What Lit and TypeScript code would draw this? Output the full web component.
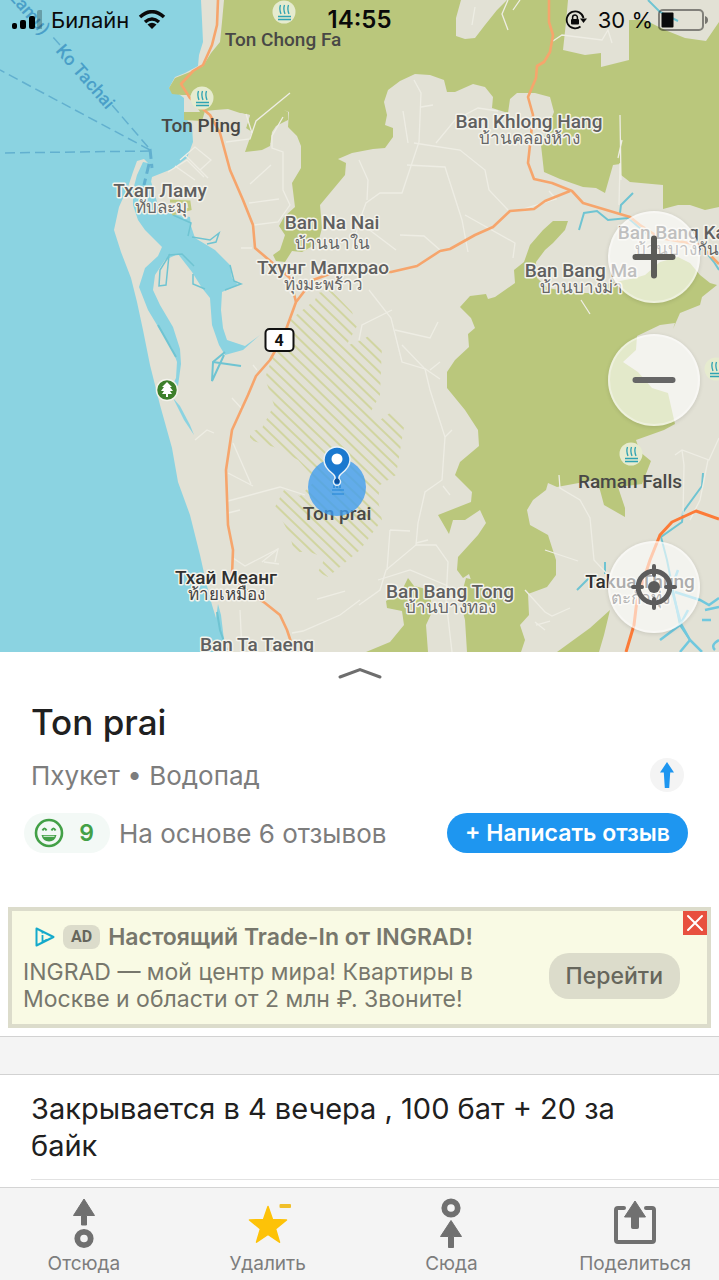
import { LitElement, html, svg, css } from "lit";
import { customElement } from "lit/decorators.js";

interface Label {
  x: number;
  y: number;
  text: string;
  kind: string;
}

const LABELS: Label[] = [
  { x: 283, y: 46, text: "Ton Chong Fa", kind: "poi" },
  { x: 201, y: 132, text: "Ton Pling", kind: "poi" },
  { x: 337, y: 520, text: "Ton prai", kind: "poi" },
  { x: 630, y: 488, text: "Raman Falls", kind: "poi" },
  { x: 160, y: 197, text: "Тхап Ламу", kind: "place" },
  { x: 161, y: 213, text: "ทับละมุ", kind: "thai" },
  { x: 529, y: 128, text: "Ban Khlong Hang", kind: "place" },
  { x: 529, y: 144, text: "บ้านคลองห้าง", kind: "thai" },
  { x: 332, y: 229, text: "Ban Na Nai", kind: "place" },
  { x: 332, y: 249, text: "บ้านนาใน", kind: "thai" },
  { x: 323, y: 274, text: "Тхунг Мапхрао", kind: "place" },
  { x: 323, y: 290, text: "ทุ่งมะพร้าว", kind: "thai" },
  { x: 581, y: 277, text: "Ban Bang Ma", kind: "place" },
  { x: 581, y: 293, text: "บ้านบางม่า", kind: "thai" },
  { x: 677, y: 239, text: "Ban Bang Kan", kind: "place" },
  { x: 677, y: 255, text: "บ้านบางกัน", kind: "thai" },
  { x: 226, y: 584, text: "Тхай Меанг", kind: "town" },
  { x: 226, y: 600, text: "ท้ายเหมือง", kind: "thai dark" },
  { x: 450, y: 598, text: "Ban Bang Tong", kind: "place" },
  { x: 450, y: 613, text: "บ้านบางทอง", kind: "thai" },
  { x: 640, y: 588, text: "Takua Thung", kind: "town" },
  { x: 640, y: 604, text: "ตะกั่วทุ่ง", kind: "thai dark" },
  { x: 257, y: 651, text: "Ban Ta Taeng", kind: "place" },
];

const FALLS = [
  [284, 12],
  [202, 98],
  [631, 454],
  [716, 369],
];

const ROADS = [
  "M226 142L250 139L256 121L290 93",
  "M252 133L246 114M283 117L272 136L272 148L283 152L283 190L290 205L278 222L254 225",
  "M250 184L271 165M249 203L279 199M241 248L252 248",
  "M180 160L195 147L211 160L200 170M185 155L208 178M175 166L195 180M168 172L187 160L204 177",
  "M414 80L421 93L419 142L402 193L380 193L366 203L359 222L352 250",
  "M414 143L460 150L485 170L489 190L508 210M407 165L445 167L462 220L468 252",
  "M403 111L408 143M421 107L433 105M436 143L455 120L478 108L498 111",
  "M359 160L368 180L367 200M359 222L396 250M400 235L424 236L440 250M465 215L515 243L513 258",
  "M369 290L391 318L394 330L402 362L425 369L430 390L445 437L442 480L425 492L418 523L416 545L386 570L380 590L359 605",
  "M402 345L424 368L440 379M430 370L440 362M445 437L452 430M443 486L450 495M416 545L436 545L448 562L446 600L452 652",
  "M416 543L428 540M390 530L387 570M390 530L410 531M378 580L410 570L448 586",
  "M559 475L560 488L580 500L590 518L594 560L620 588",
  "M545 550L578 561M525 590L545 612L552 616L570 608M535 622L545 630M536 625L550 621",
  "M475 7L472 25M508 0L502 14L508 30M520 0L513 10",
  "M553 41L562 35L602 40L608 30L612 43M620 115L621 180M618 158L622 140M620 163L619 205M549 191L556 199L520 210",
  "M228 473L253 486M228 501L280 487L305 495M228 513L240 510M233 443L251 484",
  "M233 558L245 566L278 549L275 562M264 562L279 564M240 610L242 652",
  "M292 633L303 631L340 615L360 600M317 599L345 591M278 549L262 562",
  "M359 340L362 325L392 310M395 330L430 338L438 322",
  "M675 455L682 450L709 460L719 438M682 450L684 465L683 515M708 460L700 500L690 520",
  "M581 300L590 314M232 398L243 410M195 440L207 430L214 433M253 365L257 370",
];

function icon(name: string) {
  switch (name) {
    case "from":
      return svg`<path d="M22 0L32.500 16.500H24.500V26H19.500V16.500H11.500Z" stroke="#707070" stroke-width="1" stroke-linejoin="round"/><circle cx="22" cy="39.500" r="6.700" fill="none" stroke="#707070" stroke-width="5.800"/>`;
    case "to":
      return svg`<circle cx="22" cy="9" r="6.700" fill="none" stroke="#707070" stroke-width="5.800"/><path d="M22 21.500L32.500 37.500H24.500V48.500H19.500V37.500H11.500Z" stroke="#707070" stroke-width="1" stroke-linejoin="round"/>`;
    case "remove":
      return svg`<path d="M22 7.500L26.500 20.500L40.500 21L29.500 29.800L33.500 43.200L22 35.500L10.500 43.200L14.500 29.800L3.500 21L17.500 20.500Z" fill="#fdc208" stroke="#fdc208" stroke-width="1.500" stroke-linejoin="round"/><rect x="33.500" y="5" width="11.500" height="4" rx="1" fill="#f0bf2a"/>`;
    default:
      return svg`<path d="M11 9H5Q3 9 3 11V41Q3 43 5 43H39Q41 43 41 41V11Q41 9 39 9H33" fill="none" stroke="#707070" stroke-width="4" stroke-linecap="round"/><path d="M22 2L32.500 18H25.500V28.500Q25.500 29.500 24.500 29.500H19.500Q18.500 29.500 18.500 28.500V18H11.500Z" stroke="#707070" stroke-width="1" stroke-linejoin="round"/>`;
  }
}

@customElement("place-map")
class PlaceMap extends LitElement {
  static styles = css`
    :host {
      display: block;
      position: relative;
      overflow: hidden;
      background: #8bd3e1;
      font-family: Roboto, "Noto Sans", sans-serif;
    }
    .canvas {
      position: absolute;
      inset: 0;
      width: 100%;
      height: 100%;
    }
    text {
      text-anchor: middle;
      font-weight: 500;
      font-size: 19px;
      stroke: #f4f3ec;
      stroke-width: 3px;
      stroke-linejoin: round;
      paint-order: stroke;
      fill: #606060;
    }
    text.poi {
      fill: #484846;
      stroke: none;
    }
    text.town {
      fill: #303030;
    }
    text.thai {
      font-size: 17px;
      font-weight: 400;
      fill: #666;
    }
    text.dark {
      fill: #444;
    }
    text.ferry {
      fill: #4a9fc8;
      stroke: none;
      font-size: 18px;
    }
    text.start {
      text-anchor: start;
    }
    text.end {
      text-anchor: end;
    }
    text.shield {
      fill: #111;
      stroke: none;
      font-size: 16px;
      font-weight: 700;
    }
    .controls {
      position: absolute;
      right: 19px;
      bottom: 19px;
      display: flex;
      flex-direction: column;
    }
    .control {
      width: 92px;
      height: 92px;
      margin: 0 0 31px;
      padding: 0;
      border: 2px solid rgba(255, 255, 255, 0.35);
      border-radius: 50%;
      background: rgba(255, 255, 255, 0.6);
      box-shadow: 0 1px 4px rgba(0, 0, 0, 0.12);
      display: grid;
      place-items: center;
    }
    .control.locate {
      margin: 84px 0 0;
    }
  `;

  render() {
    return html`
      <svg class="canvas" viewBox="0 0 719 652" preserveAspectRatio="xMidYMid slice" role="img" aria-label="Карта">
        <defs>
          <pattern id="hatch" width="8" height="8" patternUnits="userSpaceOnUse" patternTransform="rotate(44)">
            <path d="M0 4H8" stroke="#cdd294" stroke-width="1.600" />
          </pattern>
        </defs>
        <path
          fill="#e2e1d5"
          d="M201 0L202 20L203 42L199 55L198 66L185 73L175 77L169 88L180 95L184 98L184 116L192 126L193 142L187 158L172 169L152 177L150 187L146 180L148 163L144 159L137 161L133 172L128 187L119 207L114 230L121 252L131 278L137 302L143 330L150 365L160 405L172 448L178 482L190 515L200 555L206 582L212 605L216 618L218 604L221 615L224 640L227 652H719V0Z"
        />
        <g fill="#bac77c">
          <path
            d="M224 0L222 22L220 42L211 53L203 66L190 72L175 78L169 88L172 94L182 95L190 95L200 112L184 112L184 120L202 121L205 111L215 110L228 109L240 113L250 115L246 128L252 132L245 152L262 150L270 146L272 132L276 126L288 120L288 112L284 110L289 112L288 127L297 136L301 146L301 168L292 183L295 207L284 217L279 226L285 235L280 250L273 255L276 261L285 262L292 251L302 252L318 243L322 228L320 205L345 175L346 163L338 159L352 153L373 149L385 148L393 137L393 128L385 125L387 115L384 102L388 90L400 81L415 74L430 75L444 80L447 92L455 92L473 84L485 87L493 97L492 108L508 113L510 99L517 93L535 93L550 97L554 112L541 145L544 172L560 179L583 187L596 188L605 193L613 165L620 164L621 175L630 182L663 185L663 209L678 205L690 205L705 210L719 207V0Z"
          />
          <path
            d="M568 221L553 221L543 230L530 245L524 262L514 270L515 283L505 290L495 297L488 299L486 294L470 296L460 307L471 318L475 328L468 334L469 347L455 360L447 372L447 388L465 410L478 430L479 446L460 462L455 475L472 492L471 502L438 515L449 534L453 520L465 520L480 510L486 523L478 535L458 557L457 570L463 578L469 574L472 583L528 594L547 587L556 575L556 560L548 535L530 525L527 510L533 500L546 490L548 483L557 487L595 480L600 490L604 505L625 517L625 508L618 487L642 484L651 461L640 452L636 440L664 430L675 424L668 393L652 388L638 372L623 362L636 350L637 336L660 325L675 323L673 329L680 313L700 305L702 297L717 285L710 283L700 275L690 263L678 257L660 262L645 275L635 278L610 283L590 293L575 293L548 288L537 278L536 262L545 250L553 243L565 230Z"
          />
          <path d="M386 601L401 592L408 578L414 586L430 590L432 612L426 625L428 652H366L390 642L404 625L402 611L387 608Z" />
          <path d="M466 578L528 593L529 615L520 625L525 640L521 652H467L465 620L460 600Z" />
          <path d="M557 652L590 628L610 610L604 635L599 652Z" />
        </g>
        <g fill="#e2e1d5">
          <path d="M461 0L456 18L456 36L465 39L475 38L485 25L497 10L507 0Z" />
          <path d="M568 0L566 22L563 50L585 55L601 53L601 67L629 60L629 20L645 20L665 30L685 38L706 41L719 22V0Z" />
          <path d="M250 115L240 113L246 128ZM283 112L288 128L276 138L270 144L283 148L292 140Z" />
        </g>
        <path
          d="M315 300L318 293L331 290L352 312L357 326L346 346L362 340L370 335L382 345L380 395L370 413L380 420L394 410L404 427L396 475L380 485L378 500L382 520L360 550L328 577L318 572L325 558L310 552L294 552L290 535L275 507L284 490L300 496L316 480L298 460L274 447L250 440L250 432L262 428L274 405L265 378L275 350L290 320Z"
          fill="url(#hatch)"
        />
        <path
          fill="#8bd3e1"
          d="M150 178L148 163L143 162L137 175L133 190L133 205L138 220L145 230L162 247L158 256L145 268L139 287L148 310L160 330L172 348L177 362L176 378L173 384L178 386L181 364L180 349L173 327L160 305L153 290L155 275L165 260L178 254L192 272L202 288L210 298L212 325L219 345L225 355L243 350L260 335L245 346L227 340L223 328L221 310L222 292L238 285L232 278L230 265L215 250L195 238L191 226L190 217L172 214L158 205Z"
        />
        <g fill="none" stroke="#6fc4d2" stroke-width="1.500">
          <path d="M192 237L210 240L219 233L216 242L207 244M188 236L191 223L173 215M170 254L160 270L159 286L166 285L169 255L182 254L194 266M193 274L193 284L205 289M230 265L234 281L241 284L225 290" />
          <path d="M225 352L213 362L212 381L224 355M213 362L241 366M158 325L176 357M217 612L220 630L227 650" stroke-width="2" />
          <path d="M703 473L702 486L683 512L682 522L661 537L667 560L675 600L680 625L690 640M579 230L584 213L597 211L608 220L628 218L648 235M620 213L621 205L633 193M648 0L660 12L678 21M605 562V574M577 590L590 577M700 245L714 262L719 270" stroke-width="2" />
          <path d="M672 590L681 624L690 640L702 652M680 625L660 640M680 625L688 610M690 640L680 652M675 592L700 600L709 605L719 598M705 610L719 607M702 620H711M715 650Q710 645 719 640M667 600L678 570" stroke="#70c8de" stroke-width="2.500" />
        </g>
        <path d="M173 398L180 406L190 425L194 435L184 420Z" fill="#8bd3e1" />
        <path d="M170 201L189 202L190 209L172 214" fill="none" stroke="#c0ca80" stroke-width="3" />
        <g fill="none" stroke="#eeede4" stroke-width="1.300">
          ${ROADS.map((d) => svg`<path d=${d} />`)}
        </g>
        <g fill="none" stroke="#f6a56c" stroke-width="2.600" stroke-linejoin="round">
          <path d="M218 0L217 25L212 45L203 65L193 71L181 84L190 98L210 115L220 133L230 170L243 200L253 225L255 248L275 265L290 278L296 302" />
          <path d="M549 0L549 22L553 35L550 52L544 62L537 66L536 78L528 97L533 115L530 145L528 163L534 179L552 183L572 191L583 203L630 217L640 225L660 238L700 245L719 264" />
          <path d="M570 191L545 201L534 209L510 211L493 227L475 235L450 249L440 251L417 266L391 272L335 272L313 280L296 302L284 335L270 360L256 376L248 395L232 430L226 470L228 525L233 550L232 575L248 592L265 603L280 615L287 630L292 645" />
          <path d="M719 519L696 511L672 522L660 535L650 560L637 600L634 625L626 652" stroke="#fc7b38" stroke-width="3" />
        </g>
        <g fill="none" stroke="#62b0cf" stroke-width="1.500" stroke-dasharray="10 5">
          <path d="M150 151L0 153M150 150L0 70M148 147L112 105M60 45L52 36" />
          <path d="M150 149L152 168M149 164L144 185" stroke-width="3" />
        </g>
        <text class="ferry start" transform="translate(55 51) rotate(49)">Ko Tachai</text>
        <text class="ferry end" transform="translate(42 36) rotate(49)">(Тхап Lamu)</text>
        ${LABELS.map((l) => svg`<text class=${l.kind} x=${l.x} y=${l.y}>${l.text}</text>`)}
        ${FALLS.map(
          ([x, y]) => svg`<g transform=${`translate(${x} ${y})`}>
            <circle r="11.500" fill="#e6ebcf" />
            <path d="M-3.500 -7Q-5 -3 -3 2M0.500 -7Q-1 -3 1 2M4.500 -7Q3 -3 5 2M-6 4.500H7M-6 7.500H7" fill="none" stroke="#2fa3b3" stroke-width="1.300" />
          </g>`
        )}
        <rect x="265.500" y="329" width="28" height="22" rx="4" fill="#fff" stroke="#111" stroke-width="2" />
        <text class="shield" x="279" y="346">4</text>
        <circle cx="167" cy="390" r="10.500" fill="#3d7f2b" stroke="#f4f3ec" stroke-width="1.500" />
        <path d="M167 382L172 387H170L173 391H170L172 394H168V397H166V394H162L164 391H161L164 387H162Z" fill="#fff" />
        <circle cx="337" cy="487" r="29" fill="#3d9cf0" fill-opacity=".78" />
        <path d="M332 490H344M332 494H344M334 484V488M337 484V488M340 482V488" stroke="#1f83d6" stroke-width="1.200" />
        <path
          d="M337 447A12.800 12.800 0 0 0 324 460C324 467 329 471 333 474Q335.500 476 335 479A3.500 3.500 0 1 0 339 479Q338.500 476 341 474C345 471 350 467 350 460A12.800 12.800 0 0 0 337 447Z"
          fill="#1b79cf"
          stroke="#e8f1f7"
          stroke-width="1.500"
        />
        <circle cx="337" cy="459" r="5.500" fill="#fff" />
        <circle cx="337" cy="481" r="2.500" fill="#0d4f99" />
      </svg>
      <div class="controls">
        <button class="control" aria-label="Приблизить">
          <svg width="44" height="44" viewBox="0 0 44 44"><path d="M22 3.500V40.500M3.500 22H40.500" stroke="#5c5c58" stroke-width="6" stroke-linecap="round" /></svg>
        </button>
        <button class="control" aria-label="Отдалить">
          <svg width="44" height="44" viewBox="0 0 44 44"><path d="M3.500 22H40.500" stroke="#666" stroke-width="6" stroke-linecap="round" /></svg>
        </button>
        <button class="control locate" aria-label="Моё местоположение">
          <svg width="48" height="48" viewBox="0 0 48 48" fill="none" stroke="#5c5c5c">
            <circle cx="24" cy="24" r="15.800" stroke-width="5" />
            <circle cx="24" cy="24" r="6" fill="#5c5c5c" stroke="none" />
            <path d="M24 3V12M24 36V45M3 24H12M36 24H45" stroke-width="4" stroke-linecap="round" />
          </svg>
        </button>
      </div>
    `;
  }
}

@customElement("status-bar")
class StatusBar extends LitElement {
  static styles = css`
    :host {
      display: grid;
      grid-template-columns: 1fr auto 1fr;
      align-items: center;
      height: 40px;
      padding: 0 11px;
      color: #0a0a0a;
      font: 400 22px/26px Inter, sans-serif;
    }
    .side {
      display: flex;
      align-items: center;
      gap: 10px;
    }
    .start {
      gap: 9px;
    }
    .end {
      justify-content: flex-end;
      gap: 5px;
    }
    .time {
      font-weight: 600;
      font-size: 24px;
    }
    .lock {
      margin-right: 6px;
    }
  `;

  render() {
    return html`
      <div class="side start">
        <svg width="31" height="20" viewBox="0 0 31 20">
          <rect x="1" y="13" width="5" height="6" rx="2" />
          <rect x="9" y="10" width="6" height="9" rx="2" />
          <rect x="18" y="6" width="6" height="13" rx="2" />
          <rect x="26" y="0" width="6" height="19" rx="2" fill-opacity=".25" />
        </svg>
        <span>Билайн</span>
        <svg width="28" height="20" viewBox="0 0 28 20" fill="none" stroke="#0a0a0a" stroke-width="3.600">
          <path d="M2 7Q14 -3.500 26 7" />
          <path d="M7 12Q14 6 21 12" />
          <path d="M14 19L9.500 14.500Q14 11 18.500 14.500Z" fill="#0a0a0a" stroke="none" />
        </svg>
      </div>
      <span class="time">14:55</span>
      <div class="side end">
        <svg class="lock" width="22" height="20" viewBox="0 0 22 20" fill="none" stroke="#0a0a0a" stroke-width="1.800">
          <path d="M15.500 16.500A8.500 8.500 0 1 1 18.500 8" />
          <path d="M15 8.500H22L18.500 13Z" fill="#0a0a0a" stroke="none" />
          <rect x="6" y="9" width="8" height="5.500" rx="1" fill="#0a0a0a" stroke="none" />
          <path d="M7.600 9V7.500A2.400 2.400 0 0 1 12.400 7.500V9" stroke-width="1.500" />
        </svg>
        <span>30 %</span>
        <svg width="50" height="22" viewBox="0 0 50 22">
          <rect x="1" y="1" width="44" height="20" rx="4" fill="none" stroke="#0a0a0a" stroke-opacity=".45" stroke-width="2" />
          <rect x="3.500" y="3.500" width="12" height="15" rx="1" fill="#0a0a0a" />
          <path d="M47 7Q50 8 50 11T47 15Z" fill="#0a0a0a" fill-opacity=".5" />
        </svg>
      </div>
    `;
  }
}

@customElement("app-root")
class AppRoot extends LitElement {
  static styles = css`
    :host {
      display: flex;
      flex-direction: column;
      min-height: 100vh;
      position: relative;
      background: #fff;
      color: #202020;
      font-family: Inter, "Noto Sans", sans-serif;
    }
    button {
      font-family: inherit;
      border: 0;
      padding: 0;
      cursor: pointer;
    }
    status-bar {
      position: absolute;
      inset: 0 0 auto;
      z-index: 1;
    }
    place-map {
      flex: 1 0 auto;
      min-height: 480px;
    }
    .sheet {
      display: flex;
      flex-direction: column;
    }
    .handle {
      height: 48px;
      background: none;
      display: flex;
      justify-content: center;
      padding-top: 14px;
    }
    .title {
      margin: 0;
      padding: 0 31px;
      font-weight: 500;
      font-size: 35px;
      line-height: 44px;
    }
    .line {
      display: flex;
      align-items: center;
      justify-content: space-between;
      padding: 0 35px 0 31px;
      margin-top: 14px;
      height: 34px;
      font-size: 26px;
      color: #7d7d7d;
    }
    .compass {
      width: 34px;
      height: 34px;
      border-radius: 50%;
      background: #f4f4f4;
      display: grid;
      place-items: center;
    }
    .rating {
      display: flex;
      align-items: center;
      gap: 9px;
      margin-top: 21px;
      padding: 0 31px 0 24px;
      height: 40px;
      font-size: 26px;
      color: #7d7d7d;
    }
    .score {
      box-sizing: border-box;
      width: 86px;
      height: 40px;
      padding: 0 16px 0 10px;
      border-radius: 20px;
      background: #f3f9f6;
      color: #43a047;
      font-size: 23px;
      font-weight: 600;
      display: flex;
      align-items: center;
      justify-content: space-between;
    }
    .review {
      margin-left: auto;
      height: 40px;
      padding: 0 18px;
      border-radius: 20px;
      background: #1e96f0;
      color: #fff;
      font-size: 23px;
      font-weight: 600;
    }
    .ad {
      position: relative;
      box-sizing: border-box;
      margin: 54px 8px 8px;
      height: 121px;
      border: 4px solid #dcdccb;
      background: #f9fae4;
      color: #77776c;
      display: flex;
      align-items: center;
      justify-content: space-between;
      padding: 0 27px 0 11px;
    }
    .adhead {
      display: flex;
      align-items: center;
      gap: 8px;
      padding-left: 10px;
      margin: 0 0 8px;
      font-size: 23px;
      line-height: 28px;
      font-weight: 600;
      white-space: nowrap;
    }
    .tag {
      background: #dcdccb;
      border-radius: 8px;
      padding: 0 8px;
      font: 700 16px/24px Roboto, sans-serif;
      color: #66665c;
    }
    .adtext {
      margin: 0;
      font-size: 23px;
      line-height: 27px;
    }
    .go {
      flex: none;
      height: 46px;
      margin-top: 16px;
      padding: 0 17px;
      border-radius: 20px;
      background: #dcdccb;
      color: #66665c;
      font-size: 23px;
      font-weight: 500;
    }
    .close {
      position: absolute;
      top: 0;
      right: 0;
      width: 24px;
      height: 24px;
      background: #e8503f;
      display: grid;
      place-items: center;
    }
    .band {
      box-sizing: border-box;
      height: 39px;
      background: #f4f4f4;
      border: solid #d2d2d2;
      border-width: 1px 0;
    }
    .note {
      margin: 0 0 0 31px;
      padding: 15px 60px 15px 0;
      border-bottom: 1px solid #e2e2e2;
      font-size: 29px;
      line-height: 37px;
    }
    .tools {
      box-sizing: border-box;
      margin-top: 7px;
      height: 93px;
      border-top: 1px solid #d4d4d4;
      background: #f4f4f4;
      display: grid;
      grid-template-columns: repeat(4, 1fr);
      column-gap: 16px;
    }
    .tool {
      background: none;
      color: #7d7d7d;
      font-size: 19px;
      line-height: 24px;
      display: flex;
      flex-direction: column;
      align-items: center;
      padding-top: 11px;
      gap: 4px;
    }
    .glyph {
      overflow: visible;
      fill: #707070;
    }
  `;

  private tools = [
    { id: "from", label: "Отсюда" },
    { id: "remove", label: "Удалить" },
    { id: "to", label: "Сюда" },
    { id: "share", label: "Поделиться" },
  ];

  render() {
    return html`
      <status-bar></status-bar>
      <place-map></place-map>
      <main class="sheet">
        <button class="handle" aria-label="Развернуть">
          <svg width="44" height="14" viewBox="0 0 44 14"><path d="M2 11L22 3.500L42 11" fill="none" stroke="#6e6e6e" stroke-width="3" stroke-linecap="round" /></svg>
        </button>
        <h1 class="title">Ton prai</h1>
        <div class="line">
          <span>Пхукет • Водопад</span>
          <button class="compass" aria-label="Направление">
            <svg width="16" height="28" viewBox="0 0 16 28"><path d="M8 1L15 11.500H11.200L10.200 27H5.800L4.800 11.500H1Z" fill="#1e96f0" /></svg>
          </button>
        </div>
        <div class="rating">
          <span class="score">
            <svg width="30" height="30" viewBox="0 0 30 30" fill="none" stroke="#43a047">
              <circle cx="15" cy="15" r="13" stroke-width="2.600" />
              <path d="M8.500 12.500Q10.500 8.500 12.500 12.500M17.500 12.500Q19.500 8.500 21.500 12.500" stroke-width="2" />
              <path d="M7.500 17H22.500Q21 23.500 15 23.500T7.500 17Z" fill="#43a047" stroke="none" />
              <path d="M9.500 18.300H20.500" stroke="#e7f4ea" stroke-width="1" />
            </svg>
            <span>9</span>
          </span>
          <span>На основе 6 отзывов</span>
          <button class="review">+ Написать отзыв</button>
        </div>
        <section class="ad">
          <div>
            <h2 class="adhead">
              <svg width="22" height="22" viewBox="0 0 22 22" fill="none" stroke="#15aacb" stroke-width="2">
                <path d="M3.500 2.500L20.500 11L3.500 19.500Z" stroke-linejoin="round" />
                <path d="M9.500 9V16L14 13.500M9.500 5.500V7.500" stroke-width="1.800" />
              </svg>
              <span class="tag">AD</span>
              <span>Настоящий Trade-In от INGRAD!</span>
            </h2>
            <p class="adtext">INGRAD — мой центр мира! Квартиры в<br />Москве и области от 2 млн ₽. Звоните!</p>
          </div>
          <button class="go">Перейти</button>
          <button class="close" aria-label="Закрыть">
            <svg width="18" height="18" viewBox="0 0 18 18"><path d="M2 2L16 16M16 2L2 16" stroke="#fff" stroke-width="2" stroke-linecap="round" /></svg>
          </button>
        </section>
        <div class="band"></div>
        <p class="note">Закрывается в 4 вечера , 100 бат + 20 за байк</p>
      </main>
      <nav class="tools">
        ${this.tools.map(
          (t) => html`<button class="tool">
            <svg class="glyph" width="44" height="49" viewBox="0 0 44 49">${icon(t.id)}</svg>
            <span>${t.label}</span>
          </button>`
        )}
      </nav>
    `;
  }
}
